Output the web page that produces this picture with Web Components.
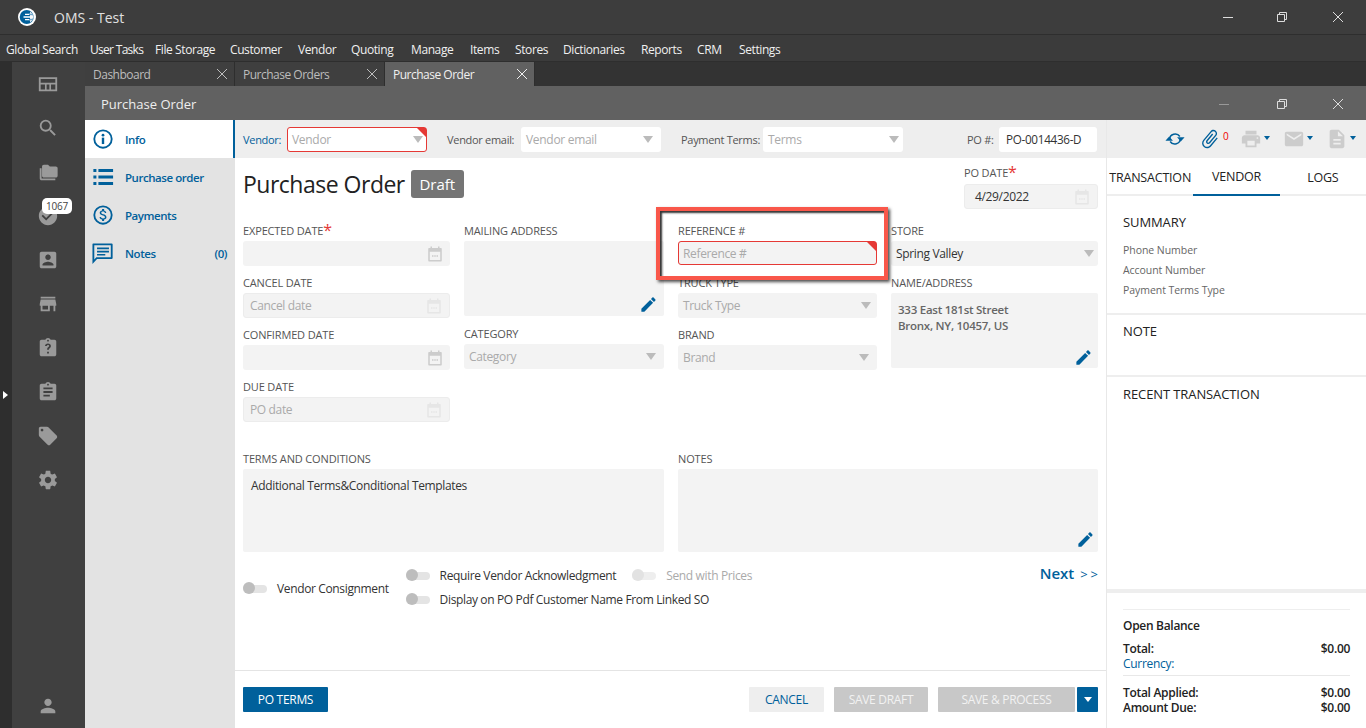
<!DOCTYPE html>
<html lang="en"><head><meta charset="utf-8"><title>OMS - Test</title>
<style>
html,body{margin:0;padding:0;height:728px;overflow:hidden;background:#333}
body{font-family:"Open Sans","Noto Sans","Liberation Sans",sans-serif;font-size:12px;letter-spacing:-.25px}
</style></head><body>
<oms-app></oms-app>
<script>
const P={
search:'<path d="M15.5 14h-.79l-.28-.27A6.471 6.471 0 0 0 16 9.5 6.5 6.5 0 1 0 9.5 16c1.61 0 3.09-.59 4.23-1.57l.27.28v.79l5 4.99L20.49 19l-4.99-5zm-6 0C7.01 14 5 11.99 5 9.5S7.01 5 9.5 5 14 7.01 14 9.5 11.99 14 9.5 14z"/>',
dash:'<path fill-rule="evenodd" d="M2 4.500h20V20H2zM4 6.500v4h16v-4zM4 12.500V18h4.700v-5.500zM10.500 12.500V18h3v-5.500zM15.300 12.500V18H20v-5.500z"/>',
folder:'<path d="M5 8H3v11c0 1.100.9 2 2 2h15v-2H5z"/><path d="M20.500 6H14l-2-2H7.500C6.400 4 5.500 4.900 5.500 6v10c0 1.100.9 2 2 2h13c1.100 0 2-.9 2-2V8c0-1.100-.9-2-2-2z"/>',
check:'<path d="M12 2C6.480 2 2 6.480 2 12s4.480 10 10 10 10-4.480 10-10S17.520 2 12 2zm-2 15l-5-5 1.410-1.410L10 14.170l7.590-7.590L19 8l-9 9z"/>',
contact:'<path d="M3 5v14c0 1.100.89 2 2 2h14c1.100 0 2-.9 2-2V5c0-1.100-.9-2-2-2H5c-1.110 0-2 .9-2 2zm12 4c0 1.660-1.340 3-3 3s-3-1.340-3-3 1.340-3 3-3 3 1.340 3 3zm-9 8c0-2 4-3.100 6-3.100s6 1.100 6 3.100v1H6v-1z"/>',
store:'<path d="M20 4H4v2h16V4zm1 10v-2l-1-5H4l-1 5v2h1v6h10v-6h4v6h2v-6h1zm-9 4H6v-4h6v4z"/>',
clipq:'<path fill-rule="evenodd" d="M19 3h-4.180C14.400 1.840 13.300 1 12 1c-1.300 0-2.400.84-2.820 2H5c-1.100 0-2 .9-2 2v14c0 1.100.9 2 2 2h14c1.100 0 2-.9 2-2V5c0-1.100-.9-2-2-2zm-7 0c.55 0 1 .45 1 1s-.45 1-1 1-1-.45-1-1 .45-1 1-1zM11 16v2h2v-2zM12 7c-1.900 0-3.200 1.100-3.300 2.900h2c.1-.7.5-1.100 1.300-1.100.7 0 1.200.4 1.200 1 0 1.300-2.200 1.300-2.200 3.700v.5h2v-.4c0-1.500 2.200-1.700 2.200-3.900C15.200 8.100 13.800 7 12 7z"/>',
clip:'<path d="M19 3h-4.180C14.400 1.840 13.300 1 12 1c-1.300 0-2.400.84-2.820 2H5c-1.100 0-2 .9-2 2v14c0 1.100.9 2 2 2h14c1.100 0 2-.9 2-2V5c0-1.100-.9-2-2-2zm-7 0c.55 0 1 .45 1 1s-.45 1-1 1-1-.45-1-1 .45-1 1-1zm2 14H7v-2h7v2zm3-4H7v-2h10v2zm0-4H7V7h10v2z"/>',
tag:'<path d="M21.410 11.580l-9-9C12.050 2.220 11.550 2 11 2H4c-1.100 0-2 .9-2 2v7c0 .55.22 1.050.59 1.420l9 9c.36.36.86.58 1.410.58.55 0 1.050-.22 1.410-.59l7-7c.37-.36.59-.86.59-1.410 0-.55-.23-1.060-.59-1.420zM5.500 7C4.670 7 4 6.330 4 5.500S4.670 4 5.500 4 7 4.670 7 5.500 6.330 7 5.500 7z"/>',
gear:'<path d="M19.430 12.980c.04-.32.07-.64.07-.98s-.03-.66-.07-.98l2.110-1.650c.19-.15.24-.42.12-.64l-2-3.460c-.12-.22-.39-.3-.61-.22l-2.490 1c-.52-.4-1.080-.73-1.690-.98l-.38-2.650C14.460 2.180 14.250 2 14 2h-4c-.25 0-.46.18-.49.42l-.38 2.650c-.61.25-1.170.59-1.690.98l-2.490-1c-.23-.09-.49 0-.61.22l-2 3.460c-.13.22-.07.49.12.64l2.110 1.650c-.04.32-.07.65-.07.98s.03.66.07.98l-2.110 1.650c-.19.15-.24.42-.12.64l2 3.460c.12.22.39.3.61.22l2.490-1c.52.4 1.080.73 1.690.98l.38 2.650c.03.24.24.42.49.42h4c.25 0 .46-.18.49-.42l.38-2.650c.61-.25 1.170-.59 1.690-.98l2.490 1c.23.09.49 0 .61-.22l2-3.460c.12-.22.07-.49-.12-.64l-2.110-1.650zM12 15.500c-1.930 0-3.500-1.570-3.500-3.500s1.570-3.500 3.500-3.500 3.500 1.570 3.500 3.500-1.570 3.500-3.500 3.500z"/>',
person:'<path d="M12 12c2.210 0 4-1.790 4-4s-1.790-4-4-4-4 1.790-4 4 1.790 4 4 4zm0 2c-2.670 0-8 1.340-8 4v2h16v-2c0-2.660-5.330-4-8-4z"/>',
edit:'<path d="M3 17.250V21h3.750L17.810 9.940l-3.750-3.750L3 17.250zM20.710 7.040c.39-.39.39-1.020 0-1.410l-2.340-2.340c-.39-.39-1.020-.39-1.410 0l-1.830 1.830 3.750 3.750 1.830-1.830z"/>',
info:'<path fill-rule="evenodd" d="M12 1.500a10.500 10.500 0 1 0 0 21 10.500 10.500 0 0 0 0-21zm0 2a8.500 8.500 0 1 1 0 17 8.500 8.500 0 0 1 0-17z"/><rect x="10.700" y="10.500" width="2.600" height="7"/><circle cx="12" cy="7.800" r="1.500"/>',
list:'<path d="M1.500 3.200h3.300v3.300H1.500zM7 3.200h16v3.300H7zM1.500 10.400h3.300v3.300H1.500zM7 10.400h16v3.300H7zM1.500 17.500h3.300v3.300H1.500zM7 17.500h16v3.300H7z"/>',
dollar:'<path fill-rule="evenodd" d="M12 1.500a10.500 10.500 0 1 0 0 21 10.500 10.500 0 0 0 0-21zm0 2a8.500 8.500 0 1 1 0 17 8.500 8.500 0 0 1 0-17z"/><path d="M12.300 11.200c-1.700-.45-2.200-.9-2.200-1.600 0-.8.750-1.350 2-1.350 1.300 0 1.800.63 1.850 1.550h1.620c-.05-1.270-.83-2.440-2.370-2.810V5.400h-2.200v1.570C9.550 7.270 8.400 8.200 8.400 9.620c0 1.700 1.400 2.540 3.450 3.030 1.830.44 2.200 1.080 2.200 1.760 0 .5-.36 1.300-2 1.300-1.530 0-2.130-.68-2.210-1.550H8.230c.09 1.610 1.300 2.520 2.770 2.830v1.590h2.200v-1.570c1.430-.27 2.570-1.100 2.570-2.610 0-2.090-1.790-2.800-3.470-3.200z"/>',
notes:'<path fill-rule="evenodd" d="M21.500 1.500h-20c-.6 0-1 .5-1 1.100V24l5-5.500h16c.6 0 1-.5 1-1V2.500c0-.6-.4-1-1-1zm-1 15H4.700l-2.200 2.500V3.500h18zM5.500 6h13v2h-13zM5.500 9.500h13v2h-13zM5.500 13h9v1.800h-9z"/>',
print:'<path d="M19 8H5c-1.660 0-3 1.340-3 3v6h4v4h12v-4h4v-6c0-1.660-1.340-3-3-3zm-3 11H8v-5h8v5zm3-7c-.55 0-1-.45-1-1s.45-1 1-1 1 .45 1 1-.45 1-1 1zm-1-9H6v4h12V3z"/>',
mail:'<path d="M20 4H4c-1.100 0-1.990.9-1.990 2L2 18c0 1.100.9 2 2 2h16c1.100 0 2-.9 2-2V6c0-1.100-.9-2-2-2zm0 4l-8 5-8-5V6l8 5 8-5v2z"/>',
doc:'<path d="M14 2H6c-1.100 0-1.990.9-1.990 2L4 20c0 1.100.89 2 1.990 2H18c1.100 0 2-.9 2-2V8l-6-6zm2 16H8v-2h8v2zm0-4H8v-2h8v2zm-3-5V3.500L18.500 9H13z"/>',
attach:'<g transform="rotate(40 12 12)"><path d="M16.500 6v11.500c0 2.210-1.790 4-4 4s-4-1.790-4-4V5c0-1.380 1.120-2.500 2.500-2.500s2.500 1.120 2.500 2.500v10.500c0 .55-.45 1-1 1s-1-.45-1-1V6H10v9.500c0 1.380 1.120 2.500 2.500 2.500s2.500-1.120 2.500-2.500V5c0-2.210-1.790-4-4-4S7 2.790 7 5v12.500c0 3.040 2.460 5.500 5.500 5.500s5.500-2.460 5.500-5.500V6h-1.500z"/></g>',
sync:'<path d="M5.500 12.500A6.700 6.700 0 0 1 17.800 9" fill="none" stroke="currentColor" stroke-width="1.800"/><path d="M14.500 10h9l-4.500 5z"/><path d="M18.500 11.500A6.700 6.700 0 0 1 6.200 15" fill="none" stroke="currentColor" stroke-width="1.800"/><path d="M.5 14h9l-4.500-5z"/>',
cal:'<path fill-rule="evenodd" d="M6 2h2v2h8V2h2v2h2c.6 0 1 .4 1 1v16c0 .6-.4 1-1 1H4c-.6 0-1-.4-1-1V5c0-.6.4-1 1-1h2zM5 9v11h14V9zM8 13.500h2v2H8zM11 13.500h2v2h-2zM14 13.500h2v2h-2z"/>'
};
function define(name,css,html){
  customElements.define(name,class extends HTMLElement{
    connectedCallback(){
      if(this.shadowRoot)return;
      const s=this.attachShadow({mode:'open'});
      const g=a=>this.getAttribute(a);
      s.innerHTML='<style>'+css+'</style>'+(typeof html==='function'?html(g,this):html);
    }
  });
}
define('ui-icon',':host{display:inline-flex;flex:none}svg{display:block;width:100%;height:100%;fill:currentColor}',
  g=>`<svg viewBox="0 0 24 24" aria-hidden="true">${P[g('name')]||''}</svg>`);
define('win-controls',`:host{display:flex;align-items:center;color:var(--c,#ddd)}
  span{display:flex;width:56px;justify-content:center}svg{width:12px;height:12px;fill:none;stroke:currentColor;stroke-width:1}
  .m{color:var(--m,currentColor);transform:translateX(var(--mx,0))}`,
  `<span class="m"><svg viewBox="0 0 12 12"><path d="M1 6.500h10"/></svg></span>
   <span><svg viewBox="0 0 12 12"><path d="M1.500 3.500h7v7h-7zM3.500 3.500v-2h7v7h-2"/></svg></span>
   <span><svg viewBox="0 0 12 12"><path d="M1 1l10 10M11 1L1 11"/></svg></span>`);
define('oms-titlebar',`:host{display:flex;align-items:center;height:34px;background:#3d3d3d;border-bottom:1px solid #2e2e2e;color:#e0e0e0}
  svg{width:18px;height:18px;margin:0 0 0 18px}b{font-weight:400;font-size:14px;margin-left:18px;letter-spacing:0}
  win-controls{margin-left:auto;--mx:2px}`,
  `<svg viewBox="0 0 18 18"><circle cx="9" cy="9" r="9" fill="#fff"/><circle cx="8.700" cy="9" r="7" fill="#00609b"/><path d="M12 3.500A6.500 6.500 0 0 1 12 14.500z" fill="#dfe9f1"/><path d="M7 6.300h8M5.500 9h10M7 11.700h8" stroke="#fff" stroke-width="1.300"/><path d="M11 6.300h4M11 11.700h4" stroke="#6fa6cc" stroke-width="1.300"/></svg><b>OMS - Test</b><win-controls></win-controls>`);
define('oms-menubar',`:host{display:grid;grid-template-columns:84px 65px 75px 68px 53px 60px 59px 45px 48px 78px 56px 42px auto;align-items:center;height:27px;box-sizing:border-box;padding:3px 6px 0;background:#3b3b3b;border-bottom:1px solid #2e2e2e;color:#f0f0f0;font-size:12px;letter-spacing:-.4px}`,
  `<slot></slot>`);
define('oms-rail',`:host{display:flex;flex-direction:column;width:73px;background:#404040;color:#9a9a9a;align-items:center;padding-right:1px;box-sizing:border-box}
  .i{height:44px;display:flex;align-items:center;justify-content:center;position:relative}
  ui-icon{width:22px;height:22px}
  .b{position:absolute;left:5px;top:4px;width:30px;height:16px;border-radius:5px;background:#fff;color:#444;font-size:10px;line-height:16px;text-align:center;letter-spacing:-.2px}
  .u{margin-top:auto}`,
  `${['dash','search','folder'].map(n=>`<div class="i"><ui-icon name="${n}"></ui-icon></div>`).join('')}
   <div class="i"><ui-icon name="check"></ui-icon><span class="b">1067</span></div>
   ${['contact','store','clipq','clip','tag','gear'].map(n=>`<div class="i"><ui-icon name="${n}"></ui-icon></div>`).join('')}
   <div class="i u"><ui-icon name="person"></ui-icon></div>`);
define('oms-strip',`:host{display:flex;width:12px;background:#2e2e2e;align-items:center}i{display:block;margin:0 0 0 3px;width:0;height:0;border:4.500px solid transparent;border-left:5px solid #fff;border-right:0}`,`<i></i>`);
define('oms-tab',`:host{display:flex;align-items:center;width:150px;height:24px;box-sizing:border-box;background:#3f3f3f;color:#bdbdbd;border-right:1px solid #2e2e2e;padding:0 6px 0 8px;font-size:12px;letter-spacing:-.5px}
  :host([active]){background:#616161;color:#f0f0f0}
  svg{margin-left:auto;width:12px;height:12px;fill:none;stroke:currentColor}`,
  `<slot></slot><svg viewBox="0 0 12 12"><path d="M1 1l10 10M11 1L1 11"/></svg>`);
define('oms-tabs',`:host{display:flex;height:24px;background:#333}`,`<slot></slot>`);
define('win-title',`:host{display:flex;align-items:center;height:34px;box-sizing:border-box;padding-top:1px;background:#616161;color:#eee;padding-left:16px;font-size:13px;letter-spacing:0}
  win-controls{margin-left:auto;--m:#999;--mx:-2px}`,`<slot></slot><win-controls></win-controls>`);
define('nav-item',`:host{display:flex;align-items:center;height:38px;padding:0 8px 0 7px;color:#00609b;font-size:11.500px;letter-spacing:-.45px;font-weight:600;box-sizing:border-box}
  :host([active]){background:#fff;border-right:2px solid #00609b}
  ui-icon{width:22px;height:22px;margin-right:11px}em{margin-left:auto;font-style:normal}`,
  g=>`<ui-icon name="${g('icon')}"></ui-icon><slot></slot>${g('count')?`<em>${g('count')}</em>`:''}`);
define('oms-nav',`:host{display:block;width:150px;flex:none;background:#e3e3e3}`,`<slot></slot>`);
define('bar-field',`:host{display:flex;align-items:center;color:#555;font-size:11px;font-weight:500;letter-spacing:-.3px}
  :host([blue]){color:#00609b}
  .n{white-space:nowrap;flex:none}
  .b{position:relative;display:flex;align-items:center;height:25px;box-sizing:border-box;margin-left:4px;background:#fff;border-radius:3px;padding:0 var(--ar,6px) 0 5px;color:#aaa;font-size:12px;font-weight:400;letter-spacing:-.3px}
  :host([err]) .b{border:1px solid #e53935;padding-left:4px}
  :host([err]) .b::after{content:"";position:absolute;top:0;right:0;border-top:9px solid #e53935;border-left:9px solid transparent}
  i{margin-left:auto;border:5.500px solid transparent;border-top:7px solid #bbb;border-bottom:0}
  :host([val]) .b{color:#333;padding-left:7px;margin-left:6px;font-size:11.700px}`,
  g=>`<span class="n" style="width:${g('lw')}px"><slot></slot></span><div class="b" style="width:${g('w')}px">${g('text')}${g('val')!==null?'':'<i></i>'}</div>`);
define('form-field',`:host{display:block;margin-bottom:9px;color:#555;font-size:11px}
  .l{height:16px;line-height:16px;margin-bottom:2px;white-space:nowrap;letter-spacing:-.15px}
  :host(.po) .l{margin-bottom:3px}
  .l span{color:#e53935;font-size:16px;line-height:10px;position:relative;top:1px}
  .b{position:relative;display:flex;align-items:center;height:25px;box-sizing:border-box;background:#f3f3f3;border-radius:3px;padding:0 var(--ar,6px) 0 5px;color:#aaa;font-size:12px;letter-spacing:-.35px}
  :host([box]) .b{height:var(--h,75px);align-items:flex-start;padding:9px 7px;border-radius:2px;line-height:16px}
  :host([mt]) .b{margin-top:1px}
  :host([dis]) .b{border:1px solid #ececec;padding-left:6px}
  :host([err]) .b{border:1px solid #e53935;padding-left:4px;height:24px}
  :host([err]) .b::after{content:"";position:absolute;top:0;right:0;border-top:9px solid #e53935;border-left:9px solid transparent}
  :host([dark]) .b{color:#333}
  :host([bold]) .b{color:#666;font-weight:600;font-size:11.500px;letter-spacing:-.25px}
  :host(.po) .b{padding-left:10px}
  i{margin-left:auto;border:5.500px solid transparent;border-top:7px solid #bbb;border-bottom:0}
  ui-icon{margin-left:auto;width:18px;height:18px;color:#ccc}
  :host([dis]) ui-icon{color:#e6e6e6}
  .e{position:absolute;right:var(--pr,6px);bottom:var(--pb,2px);color:#00609b;width:19px;height:19px;margin:0}`,
  g=>`<div class="l">${g('label')}${g('req')!==null?'<span>*</span>':''}</div>
  <div class="b" style="${g('h')?'--h:'+g('h')+'px':''}">${g('text')||''}${g('type')==='select'?'<i></i>':''}${g('type')==='date'?'<ui-icon name="cal"></ui-icon>':''}${g('pen')!==null?'<ui-icon class="e" name="edit"></ui-icon>':''}</div>`);
define('ui-toggle',`:host{display:inline-flex;align-items:center;gap:10px;color:#333;font-size:12px;letter-spacing:-.36px;white-space:nowrap}
  :host([dis]){color:#aaa}
  .t{position:relative;display:block;width:24px;height:8px;border-radius:4px;background:#e4e4e4;flex:none}
  .t::before{content:"";position:absolute;left:0;top:-3px;width:12px;height:12px;border-radius:50%;background:#bdbdbd}
  :host([dis]) .t{background:#eee}:host([dis]) .t::before{background:#e2e2e2}`,
  `<span class="t"></span><slot></slot>`);
define('ui-button',`:host{display:inline-flex;align-items:center;justify-content:center;height:25px;box-sizing:border-box;font-size:12px;letter-spacing:-.3px;border-radius:1px}
  :host([kind=primary]){background:#00609b;color:#fff}
  :host([kind=ghost]){background:#eee;color:#00609b}
  :host([kind=off]){background:#c8c8c8;color:#f2f2f2}
  i{border:4px solid transparent;border-top:5px solid #fff;border-bottom:0}`,
  g=>`<slot></slot>${g('caret')!==null?'<i></i>':''}`);
define('po-toolbar',`:host{display:flex;align-items:center;height:38px;background:#eee;padding-left:8px;box-sizing:border-box}
  ::slotted(*){flex:none}`,`<slot></slot>`);
define('po-form',`:host{display:flex;flex-direction:column;flex:1;min-height:0;padding:0 8px;box-sizing:border-box;background:#fff;position:relative}
  .head{display:flex;height:64px;box-sizing:border-box;padding-top:7px}
  h1{margin:3px 0 0;font-weight:400;font-size:23px;line-height:32px;color:#222;letter-spacing:-.5px}
  .draft{margin:5px 0 0 6px;height:28px;width:53px;border-radius:3px;background:#757575;color:#fff;font-size:15px;line-height:28px;text-align:center;letter-spacing:0}
  .po{margin-left:auto;width:134px}
  .cols{display:grid;grid-template-columns:207px 200px 199px 207px;column-gap:14px;height:229px;padding-top:1px;box-sizing:border-box}
  .two{display:grid;grid-template-columns:421px 420px;column-gap:14px}
  .opts{display:flex;align-items:flex-start;margin-top:2px}
  .rows{display:flex;flex-direction:column;gap:7px;margin-left:17px;padding-top:4px}
  .r{display:flex;gap:16px}
  .v{margin-top:17px}
  .next{margin-left:auto;flex:none;white-space:nowrap;color:#00609b;font-size:15px;font-weight:600;letter-spacing:0}
  .next small{font-size:13px;font-weight:400;letter-spacing:3px;margin-left:2px;margin-right:-3px}
  .mark{position:absolute;left:421px;top:49px;width:224px;height:65px;border:4px solid #f9574a;box-shadow:inset 2px 2px 2px rgba(0,0,0,.8),2px 2px 3px rgba(0,0,0,.7);pointer-events:none}
  .foot{margin:auto -8px 0;height:58px;border-top:1px solid #e4e4e4;display:flex;align-items:flex-start;padding:16px 8px 0;box-sizing:border-box}
  .sp{margin-left:auto}`,
  `<div class="head"><h1>Purchase Order</h1><div class="draft">Draft</div>
     <form-field class="po" label="PO DATE" req type="date" text="4/29/2022" dark dis></form-field></div>
   <div class="cols">
     <div><form-field label="EXPECTED DATE" req type="date"></form-field>
       <form-field label="CANCEL DATE" type="date" text="Cancel date" dis></form-field>
       <form-field label="CONFIRMED DATE" type="date"></form-field>
       <form-field label="DUE DATE" type="date" text="PO date" dis></form-field></div>
     <div><form-field label="MAILING ADDRESS" box mt pen style="margin-bottom:10px"></form-field>
       <form-field label="CATEGORY" type="select" text="Category" style="--ar:8px"></form-field></div>
     <div><form-field label="REFERENCE #" text="Reference #" err style="margin-bottom:10px"></form-field>
       <form-field label="TRUCK TYPE" type="select" text="Truck Type"></form-field>
       <form-field label="BRAND" type="select" text="Brand" style="--ar:8px"></form-field></div>
     <div><form-field label="STORE" type="select" text="Spring Valley" dark style="--ar:4px"></form-field>
       <form-field label="NAME/ADDRESS" box mt pen bold text="333 East 181st Street<br>Bronx, NY, 10457, US" style="--pb:1px;--pr:5px"></form-field></div>
   </div>
   <div class="two"><form-field label="TERMS AND CONDITIONS" box h="83" dark text="<span style='margin-left:1px'>Additional Terms&amp;Conditional Templates</span>"></form-field>
     <form-field label="NOTES" box h="83" pen style="--pr:3px;--pb:3px"></form-field></div>
   <div class="opts"><ui-toggle class="v">Vendor Consignment</ui-toggle>
     <div class="rows"><div class="r"><ui-toggle>Require Vendor Acknowledgment</ui-toggle><ui-toggle dis>Send with Prices</ui-toggle></div>
       <ui-toggle>Display on PO Pdf Customer Name From Linked SO</ui-toggle></div>
     <div class="next">Next <small>&gt;&gt;</small></div></div>
   <div class="mark"></div>
   <div class="foot"><ui-button kind="primary" style="width:85px">PO TERMS</ui-button>
     <ui-button class="sp" kind="ghost" style="width:75px">CANCEL</ui-button>
     <ui-button kind="off" style="width:94px;margin-left:10px">SAVE DRAFT</ui-button>
     <ui-button kind="off" style="width:137px;margin-left:10px">SAVE &amp; PROCESS</ui-button>
     <ui-button kind="primary" caret style="width:21px;margin-left:2px"></ui-button></div>`);
define('po-side',`:host{display:flex;flex-direction:column;width:259px;flex:none;background:#fff;color:#222;border-left:1px solid #e8e8e8}
  .tb{display:flex;align-items:center;height:38px;background:#eee;color:#00609b;padding-left:58px}
  .tb ui-icon{width:20px;height:20px}
  .tb .g{color:#ccc;width:22px;height:22px}
  .c{border:3.500px solid transparent;border-top:4.500px solid #00609b;border-bottom:0;margin-left:2px;margin-top:-3px}
  sup{color:#e00;font-size:10px;margin:-6px 0 0 2px;letter-spacing:0;width:7px}
  .tabs{display:flex;height:38px;border-bottom:2px solid #eee;box-sizing:border-box;font-size:12.500px;letter-spacing:-.2px;font-weight:500}
  .tabs div{flex:1;display:flex;align-items:center;justify-content:center;box-sizing:border-box;height:38px}
  .tabs .on{border-bottom:2px solid #00609b}
  section{padding:0 16px;border-bottom:2px solid #eee;box-sizing:border-box}
  h3{margin:0;font-size:13px;font-weight:500;letter-spacing:-.1px;line-height:18px}
  .s1{padding-top:17px;height:119px}
  .s1 p{margin:0;font-size:10.500px;line-height:20px;color:#666;letter-spacing:-.05px}
  .s1 h3{margin-bottom:9px}
  .s2{padding-top:7px;height:62px}
  .s3{padding-top:8px;height:216px;border-bottom:4px solid #eee}
  .sum{padding:16px 16px 0;font-size:12px;font-weight:600;letter-spacing:-.3px}
  .in{border-top:1px solid #eee;padding-top:7px}
  .rw{display:flex;justify-content:space-between;line-height:15px}
  .cur{color:#00609b;font-weight:400;line-height:16px}
  .ob{margin-bottom:6px;line-height:18px}
  hr{border:0;border-top:1px solid #e8e8e8;margin:3px 0 9px}`,
  `<div class="tb"><ui-icon name="sync"></ui-icon><ui-icon name="attach" style="margin-left:14px;width:22px;height:22px"></ui-icon><sup>0</sup>
     <ui-icon class="g" name="print" style="margin-left:10px"></ui-icon><i class="c"></i>
     <ui-icon class="g" name="mail" style="margin-left:13px"></ui-icon><i class="c"></i>
     <ui-icon class="g" name="doc" style="margin-left:13px"></ui-icon><i class="c"></i></div>
   <div class="tabs"><div>TRANSACTION</div><div class="on">VENDOR</div><div>LOGS</div></div>
   <section class="s1"><h3>SUMMARY</h3><p>Phone Number</p><p>Account Number</p><p>Payment Terms Type</p></section>
   <section class="s2"><h3>NOTE</h3></section>
   <section class="s3"><h3>RECENT TRANSACTION</h3></section>
   <div class="sum"><div class="in"><div class="ob">Open Balance</div>
     <div class="rw"><span>Total:</span><span>$0.00</span></div>
     <div class="cur">Currency:</div><hr>
     <div class="rw"><span>Total Applied:</span><span>$0.00</span></div>
     <div class="rw"><span>Amount Due:</span><span>$0.00</span></div></div></div>`);
define('oms-app',`:host{display:flex;flex-direction:column;width:1366px;height:728px;overflow:hidden}
  .main{display:flex;flex:1;min-height:0}
  .right{display:flex;flex-direction:column;flex:1;min-width:0}
  .win{display:flex;flex:1;min-height:0}
  .center{display:flex;flex-direction:column;width:871px;flex:none}`,
  `<oms-titlebar></oms-titlebar>
   <oms-menubar><span>Global Search</span><span style="letter-spacing:-.7px">User Tasks</span><span>File Storage</span><span>Customer</span><span>Vendor</span><span>Quoting</span><span>Manage</span><span>Items</span><span>Stores</span><span>Dictionaries</span><span>Reports</span><span>CRM</span><span>Settings</span></oms-menubar>
   <div class="main"><oms-strip></oms-strip><oms-rail></oms-rail>
     <div class="right">
       <oms-tabs><oms-tab>Dashboard</oms-tab><oms-tab>Purchase Orders</oms-tab><oms-tab active>Purchase Order</oms-tab></oms-tabs>
       <win-title>Purchase Order</win-title>
       <div class="win">
         <oms-nav><nav-item icon="info" active>Info</nav-item><nav-item icon="list">Purchase order</nav-item><nav-item icon="dollar">Payments</nav-item><nav-item icon="notes" count="(0)">Notes</nav-item></oms-nav>
         <div class="center">
           <po-toolbar><bar-field blue err lw="40" w="140" text="Vendor" style="--ar:3px">Vendor:</bar-field>
             <bar-field lw="70" w="140" text="Vendor email" style="margin-left:20px;--ar:8px">Vendor email:</bar-field>
             <bar-field lw="78" w="140" text="Terms" style="margin-left:20px;--ar:4px">Payment Terms:</bar-field>
             <bar-field val lw="26" w="98" text="PO-0014436-D" style="margin-left:64px">PO #:</bar-field></po-toolbar>
           <po-form></po-form>
         </div>
         <po-side></po-side>
       </div>
     </div></div>`);
</script></body></html>
